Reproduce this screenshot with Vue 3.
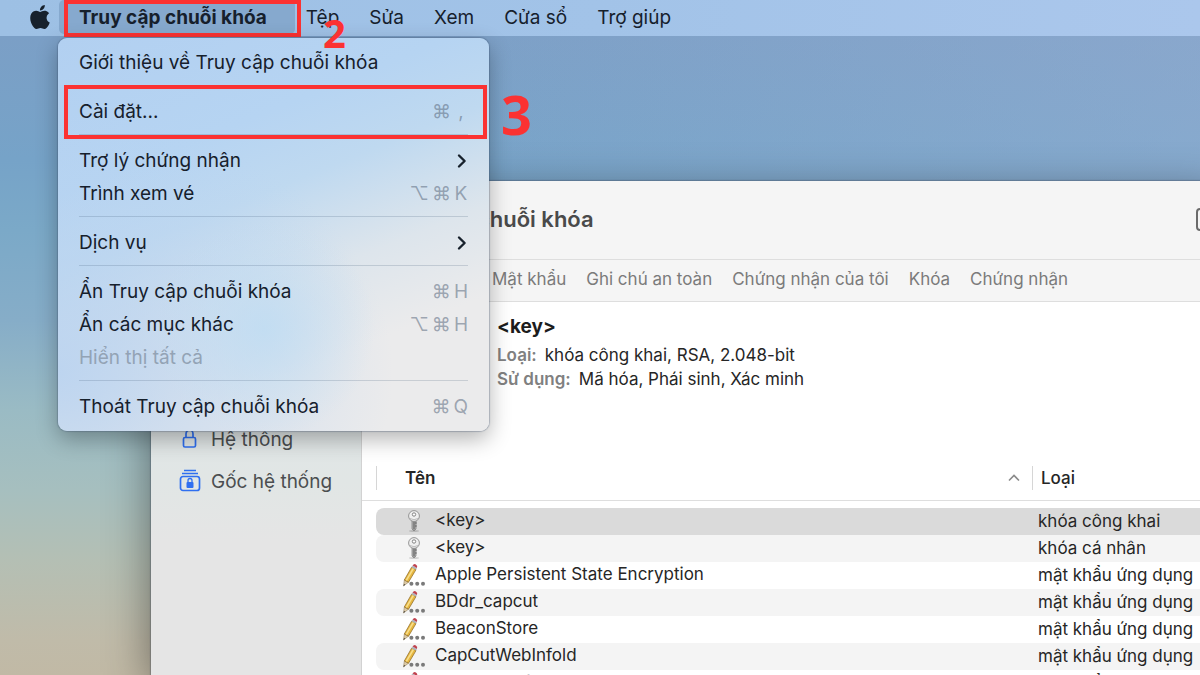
<template>
  <div class="desktop">
    <header class="menubar">
      <button class="apple" aria-label="Apple">
        <svg viewBox="0 0 24 24" width="24" height="24">
          <path
            d="M12.152 6.896c-.948 0-2.415-1.078-3.96-1.04-2.04.027-3.91 1.183-4.961 3.014-2.117 3.675-.546 9.103 1.519 12.09 1.013 1.454 2.208 3.09 3.792 3.039 1.52-.065 2.09-.987 3.935-.987 1.831 0 2.35.987 3.96.948 1.637-.026 2.676-1.48 3.676-2.948 1.156-1.688 1.636-3.325 1.662-3.415-.039-.013-3.182-1.221-3.22-4.857-.026-3.04 2.48-4.494 2.597-4.559-1.429-2.09-3.623-2.324-4.39-2.376-2-.156-3.675 1.09-4.61 1.09zM15.53 3.83c.843-1.012 1.4-2.427 1.245-3.83-1.207.052-2.662.805-3.532 1.818-.78.896-1.454 2.338-1.273 3.714 1.338.104 2.715-.688 3.559-1.701"
          />
        </svg>
      </button>
      <div class="app-item">
        <button class="app-name" @click="menuOpen = !menuOpen">Truy cập chuỗi khóa</button>
        <span class="mark mark-title"></span>
        <span class="step step-two">2</span>

        <div v-if="menuOpen" class="menu">
          <template v-for="(item, i) in menuItems" :key="i">
            <hr v-if="item.separator" />
            <button v-else class="menu-item" :disabled="item.disabled">
              <span>{{ item.label }}</span>
              <svg v-if="item.submenu" class="chevron" viewBox="0 0 10 16" width="10" height="16">
                <path d="M2 2.5 L7.6 8 L2 13.5" />
              </svg>
              <span v-else-if="item.keys" class="keys">
                <kbd v-for="key in item.keys" :key="key">{{ key }}</kbd>
              </span>
              <template v-if="item.marked">
                <span class="mark mark-row"></span>
                <span class="step step-three">3</span>
              </template>
            </button>
          </template>
        </div>
      </div>
      <nav class="menus">
        <button v-for="name in menus" :key="name">{{ name }}</button>
      </nav>
    </header>

    <section class="window">
      <aside class="sidebar">
        <button class="keychain">
          <svg viewBox="0 0 22 24" width="22" height="24">
            <rect x="4.5" y="10.5" width="12" height="9.5" rx="1.5" />
            <path d="M7 10.5 V7 a3.5 4 0 0 1 7 0 V10.5" />
          </svg>
          <span>Hệ thống</span>
        </button>
        <button class="keychain">
          <svg viewBox="0 0 22 24" width="22" height="24">
            <path d="M5 1.5 H17 M3 4.5 H19" />
            <rect x="1.5" y="7.5" width="19" height="14" rx="2.5" />
            <rect class="solid" x="7.5" y="13" width="7" height="6" rx="1" />
            <path class="thin" d="M9 13.5 V11.5 a2 2 0 0 1 4 0 V13.5" />
          </svg>
          <span>Gốc hệ thống</span>
        </button>
      </aside>

      <main class="content">
        <div class="titlebar">
          <h1>Truy cập chuỗi khóa</h1>
          <button class="tool" aria-label="Tạo mục mới"></button>
        </div>
        <div class="tabs">
          <button v-for="tab in tabs" :key="tab">{{ tab }}</button>
        </div>
        <div class="detail">
          <h2>&lt;key&gt;</h2>
          <p><b>Loại:</b>khóa công khai, RSA, 2.048-bit</p>
          <p><b>Sử dụng:</b>Mã hóa, Phái sinh, Xác minh</p>
        </div>
        <div class="list">
          <table>
            <colgroup>
              <col />
              <col class="col-type" />
            </colgroup>
            <thead>
              <tr>
                <th class="th-name">
                  <div class="th-inner">
                    <span>Tên</span>
                    <svg viewBox="0 0 12 8" width="12" height="8">
                      <path d="M1 6.5 L6 1.5 L11 6.5" />
                    </svg>
                  </div>
                </th>
                <th class="th-type"><div class="th-inner">Loại</div></th>
              </tr>
            </thead>
            <tbody>
              <tr v-for="(row, i) in rows" :key="i" :class="{ selected: i === 0 }">
                <td>
                  <div class="cell">
                    <svg v-if="row.kind === 'key'" viewBox="0 0 24 24" width="24" height="24">
                      <ellipse cx="12" cy="22" rx="5" ry="1" fill="#000" opacity="0.15" />
                      <path d="M10 11 H14 V20 L12 22 L10 20 Z" fill="#b4b4b4" stroke="#777" stroke-width="0.7" />
                      <path d="M12 12 V20.5 M13.2 14 h1.5 M13.2 17 h1.5" stroke="#555" stroke-width="1" />
                      <circle cx="12" cy="7" r="5.4" fill="#efefef" stroke="#8b8b8b" stroke-width="0.9" />
                      <circle cx="12" cy="5.5" r="1.7" fill="#fff" stroke="#777" stroke-width="0.9" />
                      <path d="M8 9.5 Q12 12 16 9.5" fill="none" stroke="#bbb" stroke-width="1" />
                    </svg>
                    <svg v-else viewBox="0 0 24 24" width="24" height="24">
                      <path d="M1.5 23 L2.3 17 L6.5 19.2 Z" fill="#dcc9a5" stroke="#8d7a55" stroke-width="0.5" />
                      <path d="M2.3 17 L9.6 4.2 L14 6.6 L6.5 19.2 Z" fill="#e6b740" stroke="#8a6420" stroke-width="0.7" />
                      <path d="M4.3 17.4 L11.4 5.4" stroke="#f8df8c" stroke-width="1.6" />
                      <path d="M9.6 4.2 L10.6 2.6 L14.9 4.9 L14 6.6 Z" fill="#aeb4bd" />
                      <path d="M10.6 2.6 Q11.8 .4 13.9 1.4 Q16 2.7 14.9 4.9 Z" fill="#c0424e" />
                      <path d="M1.5 23 L2 21 L3.2 21.7 Z" fill="#333" />
                      <circle cx="9.4" cy="20.7" r="2" fill="#7a7a7a" />
                      <circle cx="15.2" cy="20.7" r="2" fill="#7a7a7a" />
                      <circle cx="21" cy="20.7" r="2" fill="#7a7a7a" />
                    </svg>
                    <span>{{ row.name }}</span>
                  </div>
                </td>
                <td class="td-type">{{ row.type }}</td>
              </tr>
            </tbody>
          </table>
        </div>
      </main>
    </section>
  </div>
</template>

<script setup>
import { ref } from "vue";

const menuOpen = ref(true);

const menus = ["Tệp", "Sửa", "Xem", "Cửa sổ", "Trợ giúp"];

const menuItems = [
  { label: "Giới thiệu về Truy cập chuỗi khóa" },
  { separator: true },
  { label: "Cài đặt...", keys: ["⌘", ","], marked: true },
  { separator: true },
  { label: "Trợ lý chứng nhận", submenu: true },
  { label: "Trình xem vé", keys: ["⌥", "⌘", "K"] },
  { separator: true },
  { label: "Dịch vụ", submenu: true },
  { separator: true },
  { label: "Ẩn Truy cập chuỗi khóa", keys: ["⌘", "H"] },
  { label: "Ẩn các mục khác", keys: ["⌥", "⌘", "H"] },
  { label: "Hiển thị tất cả", disabled: true },
  { separator: true },
  { label: "Thoát Truy cập chuỗi khóa", keys: ["⌘", "Q"] },
];

const tabs = ["Mật khẩu", "Ghi chú an toàn", "Chứng nhận của tôi", "Khóa", "Chứng nhận"];

const rows = [
  { kind: "key", name: "<key>", type: "khóa công khai" },
  { kind: "key", name: "<key>", type: "khóa cá nhân" },
  { kind: "password", name: "Apple Persistent State Encryption", type: "mật khẩu ứng dụng" },
  { kind: "password", name: "BDdr_capcut", type: "mật khẩu ứng dụng" },
  { kind: "password", name: "BeaconStore", type: "mật khẩu ứng dụng" },
  { kind: "password", name: "CapCutWebInfold", type: "mật khẩu ứng dụng" },
  { kind: "password", name: "Chrome Safe Storage", type: "mật khẩu ứng dụng" },
];
</script>

<style>
body {
  margin: 0;
}
</style>

<style scoped>
.desktop {
  position: relative;
  height: 100vh;
  overflow: hidden;
  font-family: Inter, "Noto Sans", sans-serif;
  font-size: 19px;
  color: #16202c;
  background:
    linear-gradient(100deg, transparent 30%, rgba(160, 180, 215, 0.4)) 0 0 / 100% 181px no-repeat,
    linear-gradient(#7b9fc6 36px, #76a3c8 160px, #7ba9c8 230px, #86adc8 320px, #9abbc4 410px, #a6bfbf 490px, #b4bfb4 560px, #c0bba9 640px, #c1b9a5);
}

button {
  padding: 0;
  border: 0;
  background: none;
  font: inherit;
  color: inherit;
  text-align: left;
  white-space: nowrap;
}

h1,
h2,
p {
  margin: 0;
}

/* Menu bar */
.menubar {
  position: relative;
  z-index: 2;
  display: flex;
  height: 36px;
  padding-left: 28px;
  background: linear-gradient(90deg, #9dc0e4, #a2c3e8 50%, #abc7ec);
}

.apple {
  display: flex;
  align-items: center;
  width: 31px;
  padding-bottom: 3px;
}

.apple svg {
  fill: #17212c;
}

.app-item {
  position: relative;
}

.app-name {
  height: 34px;
  padding: 0 28px 0 20px;
  border-radius: 5px;
  background: #86a9ce;
  font-weight: 700;
}

.menus {
  display: flex;
  gap: 30px;
  height: 34px;
  margin-left: 11px;
}

/* Red step marks drawn over the interface */
.mark {
  position: absolute;
  border: 4px solid #fb3232;
  pointer-events: none;
}

.mark-title {
  inset: 0 -6px -1px 5px;
}

.mark-row {
  inset: -10px -19px -11px -15px;
}

.step {
  position: absolute;
  z-index: 3;
  font-family: "Open Sans", sans-serif;
  font-weight: 700;
  line-height: 1;
  color: #fb3232;
}

.step-two {
  top: 13px;
  left: 264px;
  font-size: 40px;
}

.step-three {
  top: -8px;
  right: -64px;
  font-size: 54px;
}

/* Dropdown */
.menu {
  position: absolute;
  top: 38px;
  left: -1px;
  width: 389px;
  padding: 8px 21px;
  border-radius: 9px;
  background:
    radial-gradient(circle at 48% 74%, rgba(190, 220, 243, 0.8), transparent 30%),
    radial-gradient(ellipse at 0 85%, rgba(186, 211, 240, 0.9), transparent 55%),
    linear-gradient(158deg, #b2d0f1 0%, #b6d4f2 28%, #bfd9f0 42%, #dde5ec 60%, #ebebec 76%);
  box-shadow: 0 0 1px 1px rgba(60, 80, 110, 0.3), 0 8px 22px rgba(0, 0, 0, 0.3);
}

.menu hr {
  height: 1px;
  margin: 6px 0 9px;
  border: 0;
  background: rgba(60, 85, 115, 0.2);
}

.menu-item {
  position: relative;
  display: flex;
  align-items: center;
  justify-content: space-between;
  width: 100%;
  height: 33px;
}

.menu-item:disabled {
  color: #93a3b5;
}

.keys {
  display: flex;
  gap: 3px;
  color: rgba(90, 105, 125, 0.55);
}

.keys kbd {
  min-width: 14px;
  font: inherit;
  text-align: center;
}

.chevron {
  margin-right: 1px;
  fill: none;
  stroke: #17212c;
  stroke-width: 2.4;
  stroke-linecap: round;
  stroke-linejoin: round;
}

/* Keychain window, running off the right and bottom edges */
.window {
  position: absolute;
  top: 181px;
  right: -24px;
  bottom: 0;
  left: 151px;
  display: flex;
  background: #fff;
  box-shadow: 0 0 1px 1px rgba(60, 70, 90, 0.3), 0 12px 42px rgba(0, 0, 0, 0.45);
}

.sidebar {
  flex: 0 0 211px;
  box-sizing: border-box;
  padding: 237px 0 0 28px;
  border-right: 1px solid #d2d2d2;
  background: linear-gradient(#dde6ee, #e1e6e5 300px, #e5e5e5 360px);
  color: #4b4e50;
}

.keychain {
  display: flex;
  align-items: center;
  gap: 10px;
  height: 42px;
}

.keychain svg {
  fill: none;
  stroke: #2f6ff0;
  stroke-width: 1.7;
}

.keychain .solid {
  fill: #2f6ff0;
  stroke: none;
}

.keychain .thin {
  stroke-width: 1.3;
}

.content {
  flex: 1;
  min-width: 0;
}

.titlebar {
  display: flex;
  align-items: center;
  justify-content: space-between;
  box-sizing: border-box;
  height: 79px;
  padding: 0 0 2px 16px;
  border-bottom: 1px solid #dedede;
  background: #f5f5f5;
}

.titlebar h1 {
  font-size: 22px;
  font-weight: 600;
  color: #4a4a4a;
}

.tool {
  width: 28px;
  height: 23px;
  border: 2px solid #6b6b6b;
  border-radius: 4px;
}

.tabs {
  display: flex;
  gap: 20px;
  box-sizing: border-box;
  height: 42px;
  padding: 0 0 3px 130px;
  border-bottom: 1px solid #dedede;
  background: #f5f5f5;
  font-size: 17px;
  color: #7b7b7b;
}

.detail {
  height: 151px;
  padding: 13px 0 0 135px;
  box-sizing: border-box;
  font-size: 17px;
  line-height: 24px;
  color: #262626;
}

.detail h2 {
  margin-bottom: 4px;
  font-size: 19px;
  line-height: 24px;
  color: #1c1c1c;
}

.detail b {
  margin-right: 8px;
  font-weight: 600;
  color: #808080;
}

/* Item list */
.list {
  padding-left: 14px;
  background: linear-gradient(#dedede, #dedede) 0 47px / 100% 1px no-repeat;
}

table {
  width: 100%;
  border-collapse: separate;
  border-spacing: 0;
  table-layout: fixed;
  font-size: 17px;
  color: #262626;
}

.col-type {
  width: 192px;
}

th {
  height: 55px;
  padding: 0 0 6px;
  box-sizing: border-box;
  text-align: left;
}

.th-inner {
  display: flex;
  align-items: center;
  justify-content: space-between;
  height: 24px;
  border-left: 1px solid #d6d6d6;
}

.th-name .th-inner {
  padding: 0 12px 0 28px;
  font-weight: 600;
}

.th-name svg {
  fill: none;
  stroke: #8a8a8a;
  stroke-width: 1.6;
}

.th-type .th-inner {
  padding-left: 8px;
  font-weight: 500;
}

td {
  box-sizing: border-box;
  height: 27px;
  padding: 0 0 2px;
  line-height: 24px;
  white-space: nowrap;
}

tr:nth-child(even) td {
  background: #f4f4f4;
}

tr.selected td {
  background: #dadada;
}

td:first-child {
  border-radius: 8px 0 0 8px;
}

.cell {
  display: flex;
  gap: 9px;
  padding-left: 26px;
}

.cell svg {
  margin-top: 1px;
}

.td-type {
  padding-left: 6px;
}
</style>
